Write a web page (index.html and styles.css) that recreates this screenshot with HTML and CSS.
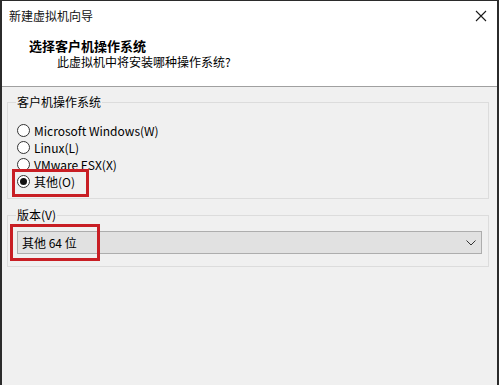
FILE: index.html
```html
<!DOCTYPE html>
<html lang="zh-CN">

<head>
    <meta charset="UTF-8">
    <title>新建虚拟机向导</title>
    <link rel="stylesheet" href="styles.css">
</head>

<body>
    <div class="window">
        <div class="titlebar">
            <span class="title">新建虚拟机向导</span>
            <svg class="close" width="12" height="12" viewBox="0 0 12 12">
                <path d="M1 1 L11 11 M11 1 L1 11" stroke="#1a1a1a" stroke-width="1.1" fill="none" />
            </svg>
        </div>

        <div class="header">
            <div class="heading">选择客户机操作系统</div>
            <div class="subheading">此虚拟机中将安装哪种操作系统?</div>
        </div>

        <div class="content">
            <fieldset class="group os-group">
                <legend>客户机操作系统</legend>
                <label class="radio"><span class="circle"></span>Microsoft Windows(W)</label>
                <label class="radio"><span class="circle"></span>Linux(L)</label>
                <label class="radio"><span class="circle"></span>VMware ESX(X)</label>
                <label class="radio checked"><span class="circle"></span>其他(O)
                    <span class="mark mark-os"></span>
                </label>
            </fieldset>

            <fieldset class="group version-group">
                <legend>版本(V)</legend>
                <div class="combo">
                    <span>其他 64 位</span>
                    <svg class="chevron" width="10" height="6" viewBox="0 0 10 6">
                        <path d="M0.5 0.5 L5 5 L9.5 0.5" stroke="#333" stroke-width="1" fill="none" />
                    </svg>
                    <span class="mark mark-version"></span>
                </div>
            </fieldset>
        </div>
    </div>
</body>

</html>
```

FILE: styles.css
```css
body {
    margin: 0;
    padding: 0;
    font-family: 'Noto Sans CJK SC', 'Noto Sans', sans-serif;
    font-size: 12px;
    line-height: 16px;
    color: #000;
    background-color: #f0f0f0;
}

.window {
    height: 384px;
    border-top: 1px solid #2b2b2b;
    border-left: 2px solid #2b2b2b;
    border-right: 2px solid #2b2b2b;
    background-color: #f0f0f0;
    overflow: hidden;
}

.titlebar {
    height: 29px;
    display: flex;
    align-items: center;
    justify-content: space-between;
    padding: 0 10px 0 7px;
    background-color: #fff;
}

.title {
    color: #111;
}

.close {
    display: block;
}

.header {
    height: 48px;
    padding: 8px 0 0 27px;
    background-color: #fff;
    border-bottom: 1px solid #a0a0a0;
}

.heading {
    font-weight: bold;
    font-size: 13px;
}

.subheading {
    padding-left: 28px;
}

.content {
    padding: 7px 8px 0 5px;
}

.group {
    margin: 0;
    padding: 12px 6px 8px 9px;
    border: 1px solid #dcdcdc;
    min-width: 0;
}

.group legend {
    padding: 0 1px;
    margin-left: -1px;
    line-height: 16px;
}

.radio {
    position: relative;
    display: flex;
    align-items: center;
    height: 17px;
}

.circle {
    width: 11px;
    height: 11px;
    margin-right: 4px;
    border: 1px solid #333;
    border-radius: 50%;
    background-color: #fff;
    box-sizing: content-box;
    display: flex;
    align-items: center;
    justify-content: center;
}

.radio.checked .circle::after {
    content: '';
    width: 7px;
    height: 7px;
    border-radius: 50%;
    background-color: #111;
}

.version-group {
    margin-top: 8px;
    padding-top: 8px;
    padding-bottom: 12px;
}

.combo {
    position: relative;
    height: 21px;
    display: flex;
    align-items: center;
    justify-content: space-between;
    padding: 0 4px 0 4px;
    background-color: #e1e1e1;
    border: 1px solid #adadad;
}

.chevron {
    display: block;
    margin-right: 1px;
}

/* red annotation boxes drawn over the dialog */
.mark {
    position: absolute;
    border: 3px solid #c81e24;
    box-sizing: border-box;
}

.mark-os {
    left: -5px;
    top: -4px;
    width: 77px;
    height: 28px;
}

.mark-version {
    left: -8px;
    top: -8px;
    width: 90px;
    height: 37px;
}
```
